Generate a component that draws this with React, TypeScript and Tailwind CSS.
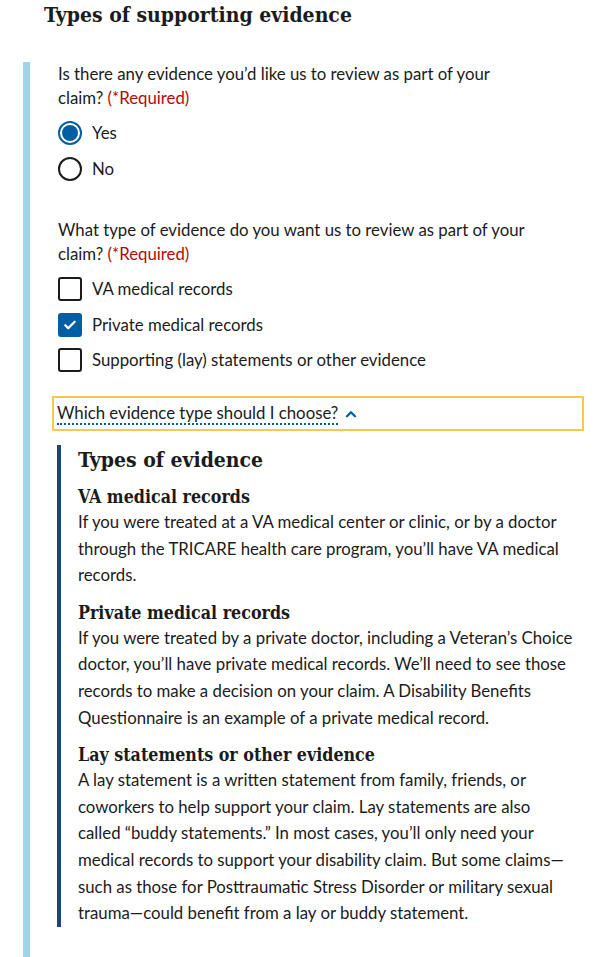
import React from "react";

const body = { fontFamily: "Lato, 'Noto Sans', sans-serif" };
const serif = { fontFamily: "'DejaVu Serif Condensed', 'DejaVu Serif', serif" };

function Radio({ checked, label }: { checked?: boolean; label: string }) {
  return (
    <div className="flex items-center h-6">
      {checked ? (
        <span className="w-6 h-6 rounded-full border-2 border-[#005ea2] p-[2px] flex">
          <span className="w-full h-full rounded-full bg-[#005ea2]" />
        </span>
      ) : (
        <span className="w-6 h-6 rounded-full border-2 border-[#1b1b1b]" />
      )}
      <span className="ml-[10px]">{label}</span>
    </div>
  );
}

function Checkbox({ checked, label }: { checked?: boolean; label: string }) {
  return (
    <div className="flex items-center h-6">
      {checked ? (
        <span className="w-6 h-6 rounded-[3px] bg-[#005ea2] flex items-center justify-center">
          <svg width="14" height="14" viewBox="0 0 24 24" fill="none">
            <path d="M4 12.5l5 5L20 6.5" stroke="white" strokeWidth="4" strokeLinecap="round" strokeLinejoin="round" />
          </svg>
        </span>
      ) : (
        <span className="w-6 h-6 rounded-[3px] border-2 border-[#1b1b1b]" />
      )}
      <span className="ml-[10px]">{label}</span>
    </div>
  );
}

export default function App() {
  return (
    <div className="w-[600px] h-[957px] overflow-hidden bg-white text-[#1b1b1b]" style={body}>
      <h2 className="pl-[44px] pt-[1px] text-[21px] leading-[28px] font-bold" style={serif}>
        Types of supporting evidence
      </h2>
      <div className="ml-[23px] mt-[33px] border-l-[7px] border-[#9ed3e9] pl-[28px] pr-[11px] h-[900px] text-[16.8px]">
        <div className="leading-[24px] w-[460px]">
          Is there any evidence you’d like us to review as part of your claim?{" "}
          <span className="text-[#b50909]">(*Required)</span>
        </div>
        <div className="mt-[11px] flex flex-col gap-[12px]">
          <Radio checked label="Yes" />
          <Radio label="No" />
        </div>
        <div className="mt-[37px] leading-[24px] w-[495px]">
          What type of evidence do you want us to review as part of your claim?{" "}
          <span className="text-[#b50909]">(*Required)</span>
        </div>
        <div className="mt-[11px] flex flex-col gap-[11.5px]">
          <Checkbox label="VA medical records" />
          <Checkbox checked label="Private medical records" />
          <Checkbox label="Supporting (lay) statements or other evidence" />
        </div>
        <div className="mt-[24px] ml-[-6px] mr-[5px] border-2 border-[#f7c948] h-[35px] pl-[3px] flex items-center">
          <span className="border-b-2 border-dotted border-[#005ea2] leading-[20px]">
            Which evidence type should I choose?
          </span>
          <svg className="ml-[7px]" width="12" height="12" viewBox="0 0 24 24" fill="none">
            <path d="M4 16.5l8-8 8 8" stroke="#005ea2" strokeWidth="4.5" strokeLinecap="round" strokeLinejoin="round" />
          </svg>
        </div>
        <div className="mt-[14px] ml-[-1px] border-l-4 border-[#1a4480] pl-[17px] pb-0">
          <h3 className="text-[21px] leading-[30px] font-bold" style={serif}>Types of evidence</h3>
          <h4 className="mt-[10px] text-[17.7px] leading-[24px] font-bold" style={serif}>VA medical records</h4>
          <p className="leading-[26.6px]">
            If you were treated at a VA medical center or clinic, or by a doctor through the TRICARE health care program, you’ll have VA medical records.
          </p>
          <h4 className="mt-[12px] text-[17.7px] leading-[24px] font-bold" style={serif}>Private medical records</h4>
          <p className="leading-[26.6px]">
            If you were treated by a private doctor, including a Veteran’s Choice doctor, you’ll have private medical records. We’ll need to see those records to make a decision on your claim. A Disability Benefits Questionnaire is an example of a private medical record.
          </p>
          <h4 className="mt-[12px] text-[17.7px] leading-[24px] font-bold" style={serif}>Lay statements or other evidence</h4>
          <p className="leading-[26.6px]">
            A lay statement is a written statement from family, friends, or coworkers to help support your claim. Lay statements are also
            <br />
            called “buddy statements.” In most cases, you’ll only need your medical records to support your disability claim. But some claims—such as those for Posttraumatic Stress Disorder or military sexual trauma—could benefit from a lay or buddy statement.
          </p>
        </div>
      </div>
    </div>
  );
}
